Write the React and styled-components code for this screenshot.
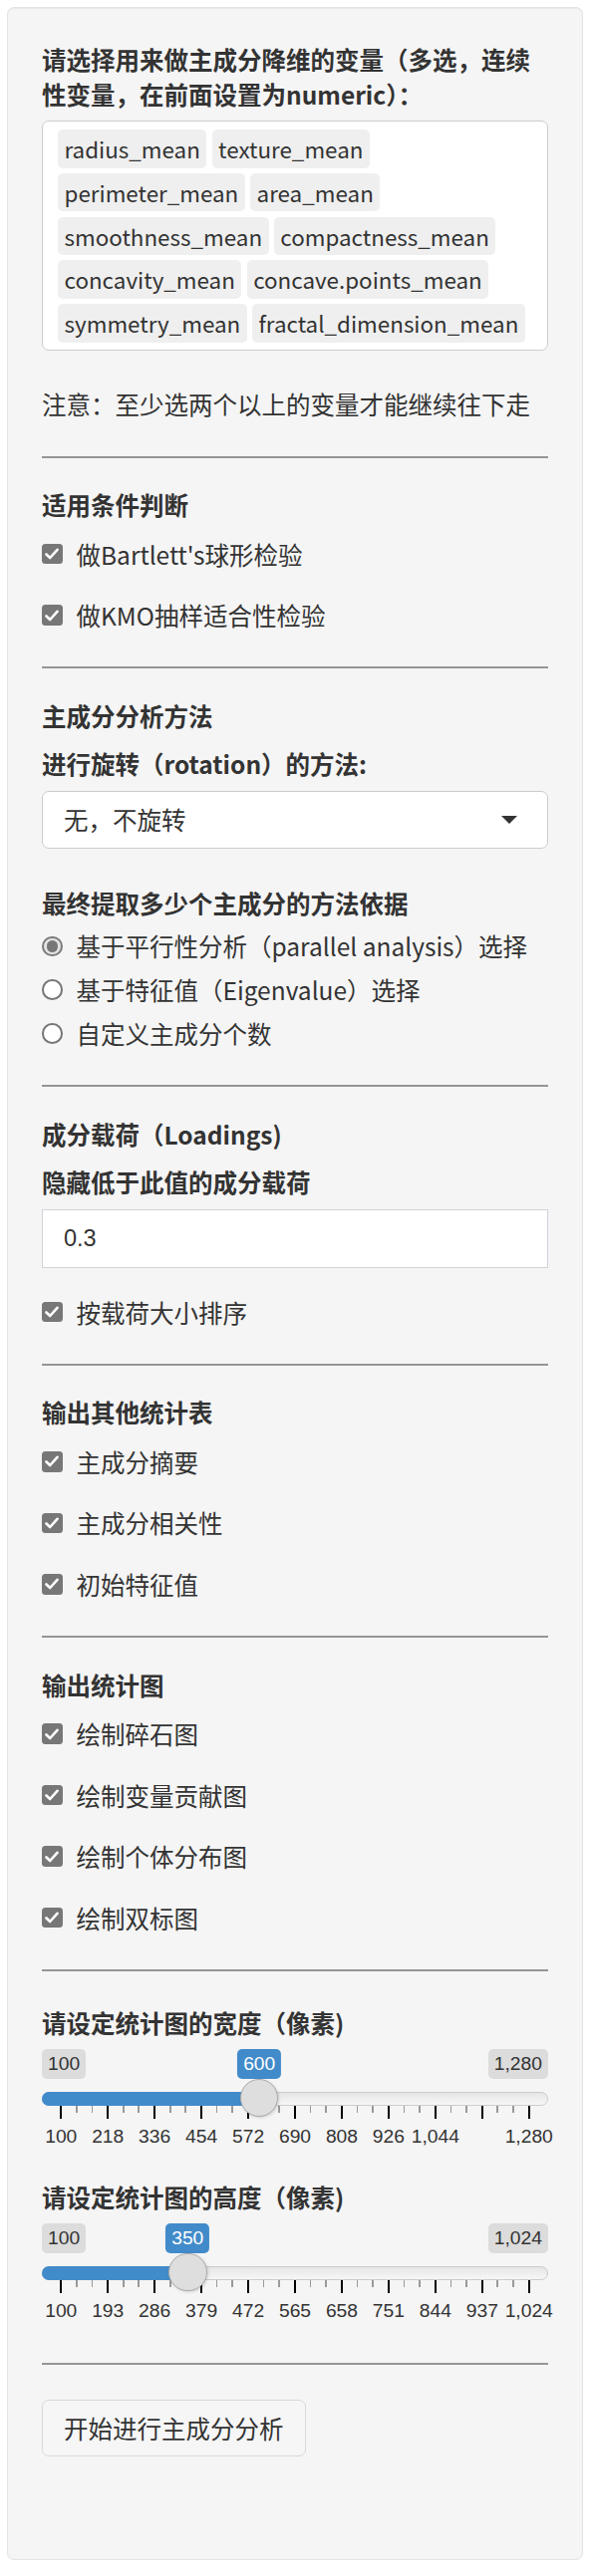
import React from "react";
import styled, { createGlobalStyle } from "styled-components";

const GlobalStyle = createGlobalStyle`
    html, body {
        margin: 0;
        padding: 0;
        background: #fff;
    }
    body {
        font-family: "Noto Sans CJK SC", "Noto Sans", sans-serif;
        color: #333;
    }
`;

const Page = styled.div`
    padding: 7px 11px 17px 7px;
`;

const Panel = styled.div`
    background: #f5f5f5;
    border: 1px solid #e3e3e3;
    border-radius: 7px;
    box-shadow: inset 0 1px 1px rgba(0, 0, 0, 0.05);
    padding: 34px 34px 103px;
    font-size: 24.5px;
    line-height: 35px;
`;

const Label = styled.div`
    font-weight: bold;
    margin-top: ${(p) => p.$mt || 0}px;
`;

const Note = styled.div`
    margin-top: 36.8px;
`;

const Divider = styled.hr`
    margin: ${(p) => p.$mt || 34.25}px 0 0;
    border: 0;
    border-top: 2px solid #959595;
    height: 0;
`;

const TagBox = styled.div`
    margin-top: 8.7px;
    display: flex;
    flex-wrap: wrap;
    gap: 5.25px;
    padding: 8.5px 5px 7px 15px;
    background: #fff;
    border: 1px solid #ccc;
    border-radius: 7px;
`;

const Tag = styled.span`
    height: 38.5px;
    line-height: 38.5px;
    padding: 0 6.5px;
    background: #efefef;
    border-radius: 5px;
    font-size: 22.4px;
`;

const CheckRow = styled.label`
    display: flex;
    align-items: center;
    gap: 14px;
    margin-top: ${(p) => p.$mt}px;
`;

const CheckBox = styled.span`
    width: 20.5px;
    height: 20.5px;
    flex-shrink: 0;
    border-radius: 3.5px;
    background: #777;
    display: flex;
    align-items: center;
    justify-content: center;
`;

const RadioGroup = styled.div`
    margin-top: 7.8px;
    display: flex;
    flex-direction: column;
    gap: 8.85px;
`;

const RadioDot = styled.span`
    position: relative;
    width: 20.5px;
    height: 20.5px;
    flex-shrink: 0;
    box-sizing: border-box;
    border-radius: 50%;
    border: 2px solid ${(p) => (p.$on ? "#7a7a7a" : "#767676")};
    background: ${(p) => (p.$on ? "#e3e3e3" : "#fff")};

    &::after {
        content: "";
        display: ${(p) => (p.$on ? "block" : "none")};
        position: absolute;
        inset: 2.5px;
        border-radius: 50%;
        background: #777;
    }
`;

const SelectBox = styled.div`
    margin-top: 9.3px;
    height: 58px;
    box-sizing: border-box;
    display: flex;
    align-items: center;
    justify-content: space-between;
    padding: 0 30px 0 21px;
    background: #fff;
    border: 1px solid #ccc;
    border-radius: 7px;
`;

const NumberBox = styled.div`
    margin-top: 9.3px;
    height: 59px;
    box-sizing: border-box;
    display: flex;
    align-items: center;
    padding: 0 21px;
    background: #fff;
    border: 1px solid #d0d4da;
    font-family: "Liberation Sans", Arial, sans-serif;
    font-size: 23.5px;
`;

const SliderWrap = styled.div`
    position: relative;
    margin-top: 9px;
    height: 100px;
    font-family: "Liberation Sans", Arial, sans-serif;
    font-size: 19.25px;
    line-height: 30px;
`;

const EdgeTag = styled.span`
    position: absolute;
    top: 0;
    ${(p) => p.$side}: 0;
    height: 30px;
    padding: 0 6px;
    border-radius: 5px;
    background: #dcdcdc;
    color: #333;
`;

const ValueTag = styled.span`
    position: absolute;
    top: 0;
    height: 30px;
    padding: 0 6px;
    border-radius: 5px;
    background: #428bca;
    color: #fff;
    transform: translateX(-50%);
`;

const Track = styled.div`
    position: absolute;
    top: 42.7px;
    left: 0;
    right: 0;
    height: 14px;
    box-sizing: border-box;
    border: 1px solid #ccc;
    border-radius: 14px;
    background: linear-gradient(to bottom, #ddd -50%, #fff 150%);
`;

const Bar = styled.div`
    position: absolute;
    top: 42.7px;
    left: 0;
    height: 14px;
    background: #428bca;
    border-radius: 14px 0 0 14px;
`;

const Handle = styled.div`
    position: absolute;
    top: 29.4px;
    width: 38.5px;
    height: 38.5px;
    margin-left: -19.25px;
    box-sizing: border-box;
    border-radius: 50%;
    border: 1px solid #ababab;
    background: #dedede;
    box-shadow: 1px 1px 3px rgba(0, 0, 0, 0.15);
`;

const Grid = styled.div`
    position: absolute;
    top: 56.7px;
    left: 19.25px;
    right: 19.25px;
    height: 43px;
`;

const Tick = styled.span`
    position: absolute;
    top: 0;
    width: ${(p) => (p.$big ? 2 : 1.75)}px;
    height: ${(p) => (p.$big ? 13.3 : 7)}px;
    margin-left: -1px;
    background: ${(p) => (p.$big ? "#000" : "#999")};
`;

const TickText = styled.span`
    position: absolute;
    top: 16px;
    line-height: 30px;
    color: #333;
    white-space: nowrap;
    transform: translateX(-50%);
`;

const RunButton = styled.button`
    margin-top: 34.5px;
    height: 56.7px;
    padding: 0 21px;
    border: 1px solid #d9d9d9;
    border-radius: 7px;
    background: #f6f6f6;
    color: #333;
    font-family: inherit;
    font-size: 24.5px;
    line-height: 35px;
`;

const variables = [
    "radius_mean",
    "texture_mean",
    "perimeter_mean",
    "area_mean",
    "smoothness_mean",
    "compactness_mean",
    "concavity_mean",
    "concave.points_mean",
    "symmetry_mean",
    "fractal_dimension_mean",
];

const fmt = (n) => n.toLocaleString("en-US");

const Check = ({ mt, children }) => (
    <CheckRow $mt={mt}>
        <CheckBox>
            <svg width="14" height="12" viewBox="0 0 14 12">
                <path
                    d="M1.5 6.5 L5.2 10 L12.5 1.8"
                    fill="none"
                    stroke="#fff"
                    strokeWidth="2.6"
                    strokeLinecap="round"
                    strokeLinejoin="round"
                />
            </svg>
        </CheckBox>
        <span>{children}</span>
    </CheckRow>
);

const Radio = ({ on, children }) => (
    <CheckRow $mt={0}>
        <RadioDot $on={on} />
        <span>{children}</span>
    </CheckRow>
);

const RangeSlider = ({ min, max, value, hidden = [] }) => {
    const span = 469.5;
    const pos = (v) => 19.25 + ((v - min) / (max - min)) * span;
    const step = Math.ceil((max - min) / 10);
    const ticks = [];
    for (let i = 0; i <= 10; i++) {
        ticks.push({ pct: i * 10, big: true, i });
        if (i < 10) {
            ticks.push({ pct: i * 10 + 10 / 3, big: false });
            ticks.push({ pct: i * 10 + 20 / 3, big: false });
        }
    }
    return (
        <SliderWrap>
            <EdgeTag $side="left">{fmt(min)}</EdgeTag>
            <EdgeTag $side="right">{fmt(max)}</EdgeTag>
            <ValueTag style={{ left: pos(value) }}>{fmt(value)}</ValueTag>
            <Track />
            <Bar style={{ width: pos(value) }} />
            <Grid>
                {ticks.map((t, k) => (
                    <Tick key={k} $big={t.big} style={{ left: `${t.pct}%` }} />
                ))}
                {ticks
                    .filter((t) => t.big && !hidden.includes(t.i))
                    .map((t) => (
                        <TickText key={t.i} style={{ left: `${t.pct}%` }}>
                            {fmt(t.i === 10 ? max : min + step * t.i)}
                        </TickText>
                    ))}
            </Grid>
            <Handle style={{ left: pos(value) }} />
        </SliderWrap>
    );
};

const App = () => {
    return (
        <Page>
            <GlobalStyle />
            <Panel>
                <Label>
                    请选择用来做主成分降维的变量（多选，连续性变量，在前面设置为numeric）：
                </Label>
                <TagBox>
                    {variables.map((v) => (
                        <Tag key={v}>{v}</Tag>
                    ))}
                </TagBox>
                <Note>注意：至少选两个以上的变量才能继续往下走</Note>

                <Divider />
                <Label $mt={29.5}>适用条件判断</Label>
                <Check mt={14.5}>做Bartlett's球形检验</Check>
                <Check mt={26.5}>做KMO抽样适合性检验</Check>

                <Divider />
                <Label $mt={29.5}>主成分分析方法</Label>
                <Label $mt={13.5}>进行旋转（rotation）的方法:</Label>
                <SelectBox>
                    <span>无，不旋转</span>
                    <svg width="16" height="8" viewBox="0 0 16 8">
                        <path d="M0 0 H16 L8 8 Z" fill="#333" />
                    </svg>
                </SelectBox>
                <Label $mt={37.7}>最终提取多少个主成分的方法依据</Label>
                <RadioGroup>
                    <Radio on>基于平行性分析（parallel analysis）选择</Radio>
                    <Radio>基于特征值（Eigenvalue）选择</Radio>
                    <Radio>自定义主成分个数</Radio>
                </RadioGroup>

                <Divider />
                <Label $mt={29.5}>成分载荷（Loadings)</Label>
                <Label $mt={13.5}>隐藏低于此值的成分载荷</Label>
                <NumberBox>0.3</NumberBox>
                <Check mt={27.2}>按载荷大小排序</Check>

                <Divider />
                <Label $mt={29.5}>输出其他统计表</Label>
                <Check mt={14.5}>主成分摘要</Check>
                <Check mt={26.5}>主成分相关性</Check>
                <Check mt={26.5}>初始特征值</Check>

                <Divider />
                <Label $mt={29.5}>输出统计图</Label>
                <Check mt={14.5}>绘制碎石图</Check>
                <Check mt={26.5}>绘制变量贡献图</Check>
                <Check mt={26.5}>绘制个体分布图</Check>
                <Check mt={26.5}>绘制双标图</Check>

                <Divider />
                <Label $mt={34.5}>请设定统计图的宽度（像素)</Label>
                <RangeSlider min={100} max={1280} value={600} hidden={[9]} />
                <Label $mt={31}>请设定统计图的高度（像素)</Label>
                <RangeSlider min={100} max={1024} value={350} />

                <Divider $mt={40} />
                <RunButton>开始进行主成分分析</RunButton>
            </Panel>
        </Page>
    );
};

export default App;
